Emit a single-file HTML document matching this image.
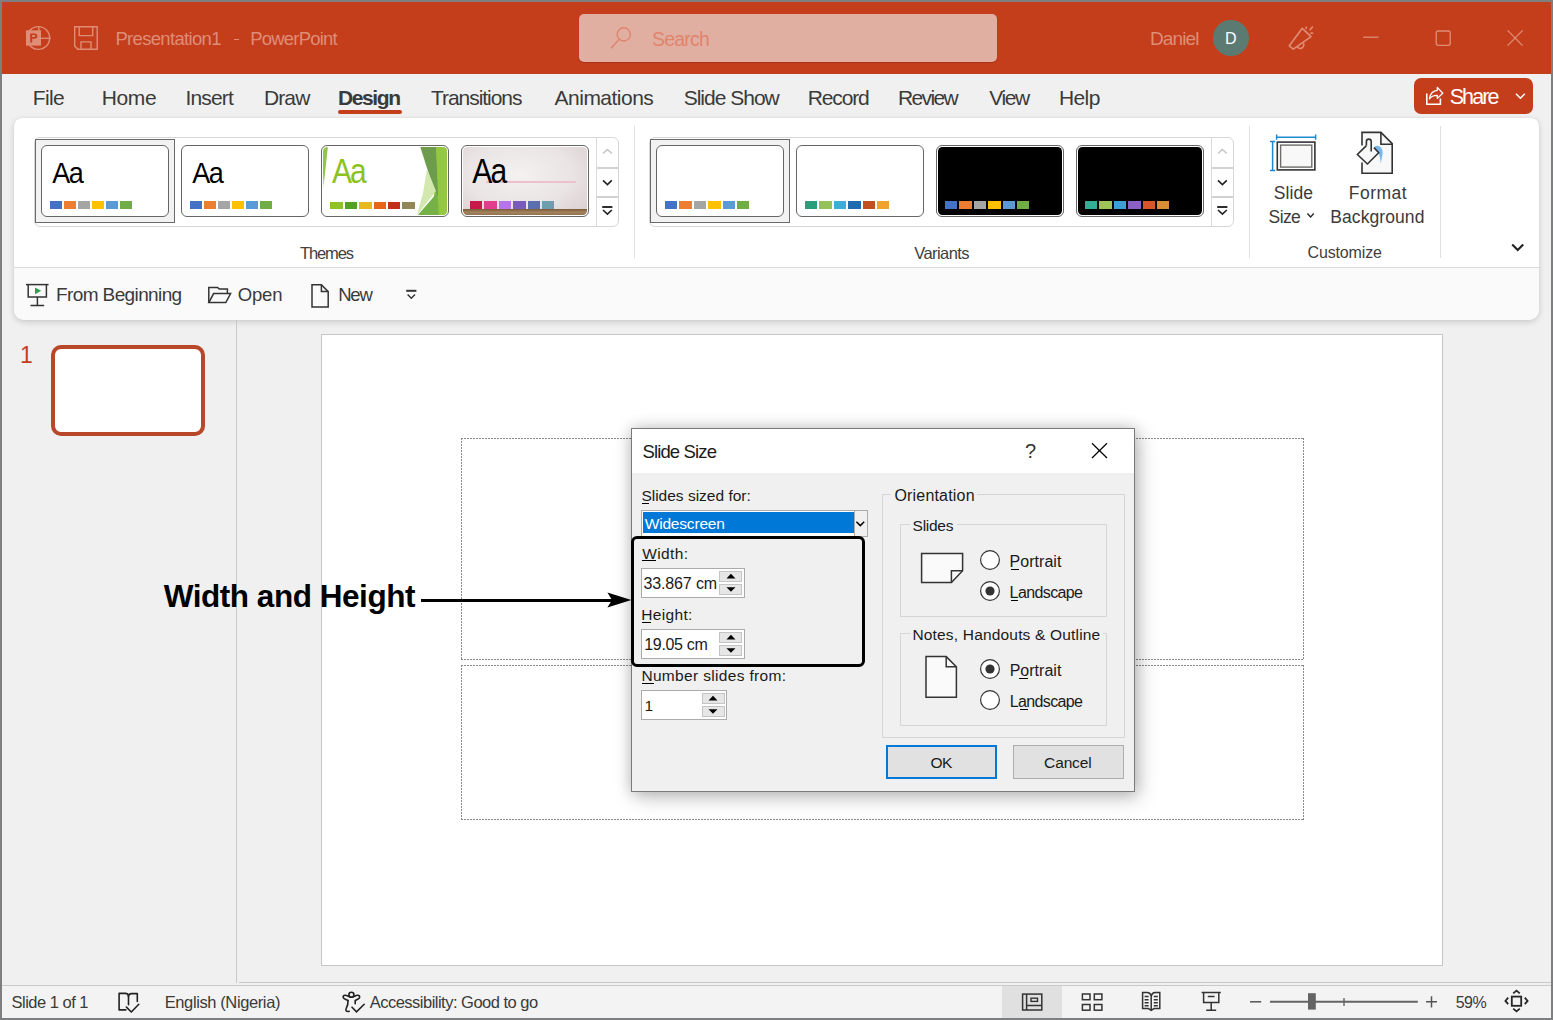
<!DOCTYPE html>
<html><head><meta charset="utf-8"><style>
html,body{margin:0;padding:0}
body{width:1553px;height:1020px;position:relative;overflow:hidden;background:#7D7F80;font-family:"Liberation Sans",sans-serif}
.a{position:absolute}
.t{position:absolute;white-space:pre;font-family:"Liberation Sans",sans-serif}
svg.a{overflow:visible}
</style></head><body>
<div class="a" style="left:2px;top:2px;width:1549px;height:1016px;background:#F0F0F0"></div>
<div class="a" style="left:2px;top:2px;width:1549px;height:72px;background:#C43E1C"></div>
<svg class="a" style="left:0px;top:0px" width="1553" height="1020" viewBox="0 0 1553 1020">
<g fill="none" stroke="#DF8D77" stroke-width="1.4">
 <circle cx="38.3" cy="38" r="11.4"/>
 <line x1="38.8" y1="26.5" x2="38.8" y2="38"/>
 <line x1="41" y1="38.3" x2="50.5" y2="38.3"/>
</g>
<rect x="26" y="30.3" width="15" height="15.3" fill="#DF8D77"/>
<path d="M30.2 42.4 V33.4 H34.6 Q37.4 33.4 37.4 36.1 Q37.4 38.8 34.6 38.8 H32.2 V42.4 Z M32.2 35.1 V37.1 H34.3 Q35.4 37.1 35.4 36.1 Q35.4 35.1 34.3 35.1 Z" fill="#C43E1C" fill-rule="evenodd"/>
<g fill="none" stroke="#DF8D77" stroke-width="1.4">
 <path d="M74.7 26.7 H97.2 V49.2 H77.8 L74.7 46.1 Z"/>
 <path d="M79.2 26.7 V35.6 H92.7 V26.7"/>
 <path d="M81 49.2 V41.9 H91 V49.2"/>
</g>
</svg>
<div class="a" style="left:115px;top:0px;width:-115px;height:0px;"></div>
<div class="t" style="left:115.4px;top:29.9px;font-size:18.5px;line-height:18.5px;font-weight:400;letter-spacing:-0.67px;color:#DF8D77;">Presentation1</div>
<div class="a" style="left:234px;top:38.6px;width:5.199999999999989px;height:1.3999999999999986px;background:#DF8D77"></div>
<div class="t" style="left:250.2px;top:29.9px;font-size:18.5px;line-height:18.5px;font-weight:400;letter-spacing:-0.8px;color:#DF8D77;">PowerPoint</div>
<div class="a" style="left:579px;top:14px;width:418px;height:48px;background:#E1AFA2;border-radius:5px;box-shadow:0 1px 1px rgba(120,30,10,.35)"></div>
<svg class="a" style="left:0px;top:0px" width="1553" height="1020" viewBox="0 0 1553 1020"><g fill="none" stroke="#E0846C" stroke-width="1.4"><circle cx="623.8" cy="34.4" r="6.6"/><line x1="619.2" y1="39.2" x2="611" y2="48.3"/></g></svg>
<div class="t" style="left:652.0px;top:29.7px;font-size:19.5px;line-height:19.5px;font-weight:400;letter-spacing:-0.8px;color:#E0846C;">Search</div>
<div class="t" style="left:1150.0px;top:29.0px;font-size:19.0px;line-height:19.0px;font-weight:400;letter-spacing:-0.88px;color:#DF8D77;">Daniel</div>
<div class="a" style="left:1213px;top:20px;width:36px;height:36px;background:#5B7B72;border-radius:50%"></div>
<div class="t" style="left:1225.0px;top:31.1px;font-size:16.0px;line-height:16.0px;font-weight:400;letter-spacing:0px;color:#FFFFFF;">D</div>
<svg class="a" style="left:0px;top:0px" width="1553" height="1020" viewBox="0 0 1553 1020"><g fill="none" stroke="#DF8D77" stroke-width="1.6" stroke-linejoin="round">
<path d="M1302.3 28.3 L1311 36.6 L1293.3 49.2 L1289.3 45.8 Z"/>
<path d="M1297.2 46.5 A3.3 3.3 0 1 0 1303.4 43.2"/>
<line x1="1306.2" y1="26.4" x2="1306.2" y2="29"/>
<line x1="1309.6" y1="30.2" x2="1312.8" y2="26.6"/>
<line x1="1310.2" y1="33.2" x2="1313.2" y2="33.2"/>
</g>
<g fill="none" stroke="#DF8D77" stroke-width="1.3">
<line x1="1363.2" y1="37.2" x2="1378.6" y2="37.2"/>
<rect x="1436.2" y="31" width="14" height="14.3" rx="2"/>
<line x1="1507.6" y1="30.4" x2="1522.6" y2="45.6"/><line x1="1522.6" y1="30.4" x2="1507.6" y2="45.6"/>
</g></svg>
<div class="t" style="left:32.7px;top:87.1px;font-size:21.0px;line-height:21.0px;font-weight:400;letter-spacing:-0.63px;color:#3A3A3A;">File</div>
<div class="t" style="left:101.7px;top:87.1px;font-size:21.0px;line-height:21.0px;font-weight:400;letter-spacing:-0.33px;color:#3A3A3A;">Home</div>
<div class="t" style="left:185.5px;top:87.1px;font-size:21.0px;line-height:21.0px;font-weight:400;letter-spacing:-0.84px;color:#3A3A3A;">Insert</div>
<div class="t" style="left:264.0px;top:87.1px;font-size:21.0px;line-height:21.0px;font-weight:400;letter-spacing:-0.9px;color:#3A3A3A;">Draw</div>
<div class="t" style="left:338.0px;top:87.1px;font-size:21.0px;line-height:21.0px;font-weight:700;letter-spacing:-1.4px;color:#3A3A3A;">Design</div>
<div class="t" style="left:431.0px;top:87.1px;font-size:21.0px;line-height:21.0px;font-weight:400;letter-spacing:-1.05px;color:#3A3A3A;">Transitions</div>
<div class="t" style="left:554.6px;top:87.1px;font-size:21.0px;line-height:21.0px;font-weight:400;letter-spacing:-0.52px;color:#3A3A3A;">Animations</div>
<div class="t" style="left:683.7px;top:87.1px;font-size:21.0px;line-height:21.0px;font-weight:400;letter-spacing:-1.0px;color:#3A3A3A;">Slide Show</div>
<div class="t" style="left:807.8px;top:87.1px;font-size:21.0px;line-height:21.0px;font-weight:400;letter-spacing:-1.16px;color:#3A3A3A;">Record</div>
<div class="t" style="left:897.9px;top:87.1px;font-size:21.0px;line-height:21.0px;font-weight:400;letter-spacing:-1.6px;color:#3A3A3A;">Review</div>
<div class="t" style="left:989.3px;top:87.1px;font-size:21.0px;line-height:21.0px;font-weight:400;letter-spacing:-1.4px;color:#3A3A3A;">View</div>
<div class="t" style="left:1058.9px;top:87.1px;font-size:21.0px;line-height:21.0px;font-weight:400;letter-spacing:-0.57px;color:#3A3A3A;">Help</div>
<div class="a" style="left:338px;top:110.3px;width:63.80000000000001px;height:3.299999999999997px;background:#C43E1C;border-radius:2px"></div>
<div class="a" style="left:1414px;top:78px;width:119.29999999999995px;height:36px;background:#C43E1C;border-radius:7px"></div>
<svg class="a" style="left:0px;top:0px" width="1553" height="1020" viewBox="0 0 1553 1020"><g fill="none" stroke="#fff" stroke-width="1.6" stroke-linejoin="miter">
<path d="M1426.8 93.6 V104.2 H1440.4 V98.6"/>
<path d="M1437.3 87.4 L1442.8 93.2 L1437.3 98.4 V95.4 Q1432.2 95.2 1429.4 98.8 Q1430.6 90.8 1437.3 90.3 Z" stroke-width="1.3" stroke-linejoin="round"/>
<path d="M1516 93.8 L1520.4 98.2 L1524.8 93.8"/>
</g></svg>
<div class="t" style="left:1449.7px;top:87.0px;font-size:21.5px;line-height:21.5px;font-weight:400;letter-spacing:-1.93px;color:#FFFFFF;">Share</div>
<div class="a" style="left:14px;top:118px;width:1525px;height:202px;background:#FFFFFF;border-radius:8px 8px 10px 10px;box-shadow:0 2px 6px rgba(0,0,0,.16),0 0 1px rgba(0,0,0,.14)"></div>
<div class="a" style="left:14px;top:267px;width:1525px;height:53px;background:#FAFAFA;border-top:1px solid #DADADA;border-radius:0 0 10px 10px;box-sizing:border-box"></div>
<div class="a" style="left:33.5px;top:136.5px;width:585.0px;height:90.0px;border:1px solid #D6D6D6;border-radius:6px;box-sizing:border-box"></div><div class="a" style="left:596px;top:137px;width:1px;height:89px;background:#DADADA"></div><div class="a" style="left:597px;top:167px;width:21px;height:1.5999999999999943px;background:#D2D2D2"></div><div class="a" style="left:597px;top:196.2px;width:21px;height:1.6000000000000227px;background:#D2D2D2"></div><svg class="a" style="left:0px;top:0px" width="1553" height="1020" viewBox="0 0 1553 1020"><g fill="none" stroke-width="1.4">
<path d="M603 153.6 L607.4 149.4 L611.8 153.6" stroke="#C4C4C4"/>
<path d="M603 180.4 L607.4 184.6 L611.8 180.4" stroke="#222" stroke-width="1.6"/>
<path d="M602.2 207 H612.4" stroke="#222" stroke-width="1.9"/>
<path d="M603 210 L607.4 214.2 L611.8 210" stroke="#222" stroke-width="1.6"/>
</g></svg><div class="a" style="left:35px;top:139px;width:140px;height:84px;border:1.5px solid #6A6A6A;background:#F2F2F2;box-sizing:border-box"></div><div class="a" style="left:41px;top:145px;width:128px;height:72px;border:1.2px solid #666;border-radius:6px;box-sizing:border-box;background:#fff"></div><div class="a" style="left:43px;top:147px;width:124px;height:68px;border-radius:4.5px;overflow:hidden;background:#fff"><div class="a" style="left:7px;top:54px;width:12px;height:8px;background:#4472C4"></div><div class="a" style="left:21px;top:54px;width:12px;height:8px;background:#ED7D31"></div><div class="a" style="left:35px;top:54px;width:12px;height:8px;background:#A5A5A5"></div><div class="a" style="left:49px;top:54px;width:12px;height:8px;background:#FFC000"></div><div class="a" style="left:63px;top:54px;width:12px;height:8px;background:#5B9BD5"></div><div class="a" style="left:77px;top:54px;width:12px;height:8px;background:#70AD47"></div></div><div class="a" style="left:181px;top:145px;width:128px;height:72px;border:1.2px solid #666;border-radius:6px;box-sizing:border-box;background:#fff"></div><div class="a" style="left:183px;top:147px;width:124px;height:68px;border-radius:4.5px;overflow:hidden;background:#fff"><div class="a" style="left:7px;top:54px;width:12px;height:8px;background:#4472C4"></div><div class="a" style="left:21px;top:54px;width:12px;height:8px;background:#ED7D31"></div><div class="a" style="left:35px;top:54px;width:12px;height:8px;background:#A5A5A5"></div><div class="a" style="left:49px;top:54px;width:12px;height:8px;background:#FFC000"></div><div class="a" style="left:63px;top:54px;width:12px;height:8px;background:#5B9BD5"></div><div class="a" style="left:77px;top:54px;width:12px;height:8px;background:#70AD47"></div></div><div class="a" style="left:321px;top:145px;width:128px;height:72px;border:1.2px solid #666;border-radius:6px;box-sizing:border-box;background:#fff"></div><div class="a" style="left:323px;top:147px;width:124px;height:68px;border-radius:4.5px;overflow:hidden;background:#fff"><svg class="a" style="left:0;top:0" width="124" height="68" viewBox="2 2 124 68">
<rect x="0" y="0" width="128" height="72" fill="#fff"/>
<polygon points="1,1 7,1 2.5,42" fill="#92C64A"/>
<polygon points="115,1 127,1 127,71 112,71" fill="#8CC43C"/>
<polygon points="99,1 115,1 117,52 112,42" fill="#6D9C4C"/>
<polygon points="106,24 115,46 96,70 102,48" fill="#D3E8AF"/>
<polygon points="96,71 116,48 118,71" fill="#76B148"/>
<polygon points="115,1 127,1 127,71 118,71 117,40" fill="#94C841"/>
</svg><div class="a" style="left:7.399999999999999px;top:54.5px;width:12.4px;height:7.4px;background:#90C226"></div><div class="a" style="left:21.799999999999997px;top:54.5px;width:12.4px;height:7.4px;background:#54A021"></div><div class="a" style="left:36.2px;top:54.5px;width:12.4px;height:7.4px;background:#E6B91E"></div><div class="a" style="left:50.6px;top:54.5px;width:12.4px;height:7.4px;background:#E76618"></div><div class="a" style="left:65.0px;top:54.5px;width:12.4px;height:7.4px;background:#C42F1A"></div><div class="a" style="left:79.4px;top:54.5px;width:12.4px;height:7.4px;background:#918655"></div></div><div class="a" style="left:461px;top:145px;width:128px;height:72px;border:1.2px solid #666;border-radius:6px;box-sizing:border-box;background:#fff"></div><div class="a" style="left:463px;top:147px;width:124px;height:68px;border-radius:4.5px;overflow:hidden;background:#fff"><div class="a" style="left:0;top:0;width:124px;height:68px;background:radial-gradient(ellipse at 45% 40%,#F4F1F1 0%,#EAE4E4 55%,#D8CDCD 100%)"></div><div class="a" style="left:0;top:61.5px;width:124px;height:8px;background:linear-gradient(#7A5A38,#A3835E 40%,#86663F)"></div><div class="a" style="left:23px;top:34.3px;width:90px;height:1.4px;background:#EDC0CD"></div><div class="a" style="left:6.899999999999977px;top:54px;width:12.5px;height:8.2px;background:#C8194B"></div><div class="a" style="left:21.299999999999976px;top:54px;width:12.5px;height:8.2px;background:#E23C8C"></div><div class="a" style="left:35.699999999999974px;top:54px;width:12.5px;height:8.2px;background:#B872F0"></div><div class="a" style="left:50.09999999999998px;top:54px;width:12.5px;height:8.2px;background:#7B5BB8"></div><div class="a" style="left:64.49999999999997px;top:54px;width:12.5px;height:8.2px;background:#5A6FAD"></div><div class="a" style="left:78.89999999999998px;top:54px;width:12.5px;height:8.2px;background:#6D9EAE"></div></div>
<div class="t" style="left:52.3px;top:161.0px;font-size:27px;line-height:27px;font-weight:400;letter-spacing:-1.6px;color:#000000;transform:scaleY(1.121);transform-origin:0 22.0px;">Aa</div>
<div class="t" style="left:192.3px;top:161.0px;font-size:27px;line-height:27px;font-weight:400;letter-spacing:-1.6px;color:#000000;transform:scaleY(1.121);transform-origin:0 22.0px;">Aa</div>
<div class="t" style="left:332.0px;top:158.0px;font-size:30px;line-height:30px;font-weight:400;letter-spacing:-2.0px;color:#8CC21E;transform:scaleY(1.19);transform-origin:0 25.0px;">Aa</div>
<div class="t" style="left:472.2px;top:157.8px;font-size:30px;line-height:30px;font-weight:400;letter-spacing:-1.6px;color:#000000;transform:scaleY(1.19);transform-origin:0 25.0px;">Aa</div>
<div class="a" style="left:648.5px;top:136.5px;width:585.0px;height:90.0px;border:1px solid #D6D6D6;border-radius:6px;box-sizing:border-box"></div><div class="a" style="left:1211px;top:137px;width:1px;height:89px;background:#DADADA"></div><div class="a" style="left:1212px;top:167px;width:21px;height:1.5999999999999943px;background:#D2D2D2"></div><div class="a" style="left:1212px;top:196.2px;width:21px;height:1.6000000000000227px;background:#D2D2D2"></div><svg class="a" style="left:0px;top:0px" width="1553" height="1020" viewBox="0 0 1553 1020"><g fill="none" stroke-width="1.4">
<path d="M1218 153.6 L1222.4 149.4 L1226.8 153.6" stroke="#C4C4C4"/>
<path d="M1218 180.4 L1222.4 184.6 L1226.8 180.4" stroke="#222" stroke-width="1.6"/>
<path d="M1217.2 207 H1227.4" stroke="#222" stroke-width="1.9"/>
<path d="M1218 210 L1222.4 214.2 L1226.8 210" stroke="#222" stroke-width="1.6"/>
</g></svg><div class="a" style="left:650px;top:139px;width:140px;height:84px;border:1.5px solid #6A6A6A;background:#F2F2F2;box-sizing:border-box"></div><div class="a" style="left:656px;top:145px;width:128px;height:72px;border:1.2px solid #666;border-radius:6px;box-sizing:border-box;background:#fff"></div><div class="a" style="left:658px;top:147px;width:124px;height:68px;border-radius:4.5px;overflow:hidden;background:#fff"><div class="a" style="left:7.0px;top:54px;width:12.4px;height:8px;background:#4472C4"></div><div class="a" style="left:21.4px;top:54px;width:12.4px;height:8px;background:#ED7D31"></div><div class="a" style="left:35.8px;top:54px;width:12.4px;height:8px;background:#A5A5A5"></div><div class="a" style="left:50.2px;top:54px;width:12.4px;height:8px;background:#FFC000"></div><div class="a" style="left:64.6px;top:54px;width:12.4px;height:8px;background:#5B9BD5"></div><div class="a" style="left:79.0px;top:54px;width:12.4px;height:8px;background:#70AD47"></div></div><div class="a" style="left:796px;top:145px;width:128px;height:72px;border:1.2px solid #666;border-radius:6px;box-sizing:border-box;background:#fff"></div><div class="a" style="left:798px;top:147px;width:124px;height:68px;border-radius:4.5px;overflow:hidden;background:#fff"><div class="a" style="left:7.0px;top:54px;width:12.4px;height:8px;background:#2A9D7B"></div><div class="a" style="left:21.4px;top:54px;width:12.4px;height:8px;background:#94C25A"></div><div class="a" style="left:35.8px;top:54px;width:12.4px;height:8px;background:#3DAFD6"></div><div class="a" style="left:50.2px;top:54px;width:12.4px;height:8px;background:#1F6BAE"></div><div class="a" style="left:64.6px;top:54px;width:12.4px;height:8px;background:#C24F1E"></div><div class="a" style="left:79.0px;top:54px;width:12.4px;height:8px;background:#F0A22E"></div></div><div class="a" style="left:936px;top:145px;width:128px;height:72px;border:1.2px solid #666;border-radius:6px;box-sizing:border-box;background:#fff"></div><div class="a" style="left:938px;top:147px;width:124px;height:68px;border-radius:4.5px;overflow:hidden;background:#fff"><div class="a" style="left:0;top:0;width:124px;height:68px;background:#000"></div><div class="a" style="left:7.0px;top:54px;width:12.4px;height:8px;background:#4472C4"></div><div class="a" style="left:21.4px;top:54px;width:12.4px;height:8px;background:#ED7D31"></div><div class="a" style="left:35.8px;top:54px;width:12.4px;height:8px;background:#A5A5A5"></div><div class="a" style="left:50.2px;top:54px;width:12.4px;height:8px;background:#FFC000"></div><div class="a" style="left:64.6px;top:54px;width:12.4px;height:8px;background:#5B9BD5"></div><div class="a" style="left:79.0px;top:54px;width:12.4px;height:8px;background:#70AD47"></div></div><div class="a" style="left:1076px;top:145px;width:128px;height:72px;border:1.2px solid #666;border-radius:6px;box-sizing:border-box;background:#fff"></div><div class="a" style="left:1078px;top:147px;width:124px;height:68px;border-radius:4.5px;overflow:hidden;background:#fff"><div class="a" style="left:0;top:0;width:124px;height:68px;background:#000"></div><div class="a" style="left:7.0px;top:54px;width:12.4px;height:8px;background:#31AE94"></div><div class="a" style="left:21.4px;top:54px;width:12.4px;height:8px;background:#9DC458"></div><div class="a" style="left:35.8px;top:54px;width:12.4px;height:8px;background:#3C9FD6"></div><div class="a" style="left:50.2px;top:54px;width:12.4px;height:8px;background:#8A60C6"></div><div class="a" style="left:64.6px;top:54px;width:12.4px;height:8px;background:#D9542B"></div><div class="a" style="left:79.0px;top:54px;width:12.4px;height:8px;background:#D98E36"></div></div>
<div class="t" style="left:300.0px;top:244.8px;font-size:16.5px;line-height:16.5px;font-weight:400;letter-spacing:-1.12px;color:#404040;">Themes</div>
<div class="t" style="left:914.2px;top:244.5px;font-size:16.5px;line-height:16.5px;font-weight:400;letter-spacing:-0.56px;color:#404040;">Variants</div>
<div class="t" style="left:1307.5px;top:245.2px;font-size:16.0px;line-height:16.0px;font-weight:400;letter-spacing:-0.15px;color:#404040;">Customize</div>
<div class="a" style="left:634px;top:126px;width:1px;height:132px;background:#E0E0E0"></div>
<div class="a" style="left:1249px;top:126px;width:1px;height:132px;background:#E0E0E0"></div>
<div class="a" style="left:1440px;top:126px;width:1px;height:132px;background:#E0E0E0"></div>
<svg class="a" style="left:0px;top:0px" width="1553" height="1020" viewBox="0 0 1553 1020"><g fill="none">
<path d="M1276.6 137.2 H1315.6 M1276.6 134.6 V139.8 M1315.6 134.6 V139.8" stroke="#1E88D0" stroke-width="1.5"/>
<path d="M1272.6 141.4 V170.4 M1270 141.4 H1275.2 M1270 170.4 H1275.2" stroke="#1E88D0" stroke-width="1.5"/>
<rect x="1277.3" y="142.1" width="37.6" height="27.8" stroke="#333" stroke-width="1.6" fill="#FFFFFF"/>
<rect x="1280.6" y="145.1" width="31.2" height="22" stroke="#6E6C68" stroke-width="1.4" fill="#F8F8F8"/>
</g></svg>
<div class="t" style="left:1273.7px;top:184.7px;font-size:17.5px;line-height:17.5px;font-weight:400;letter-spacing:0.12px;color:#3A3A3A;">Slide</div>
<div class="t" style="left:1268.6px;top:209.0px;font-size:17.5px;line-height:17.5px;font-weight:400;letter-spacing:-0.63px;color:#3A3A3A;">Size</div>
<svg class="a" style="left:0px;top:0px" width="1553" height="1020" viewBox="0 0 1553 1020"><path d="M1307.4 213.6 L1310.6 217 L1313.8 213.6" fill="none" stroke="#262626" stroke-width="1.4"/></svg>
<svg class="a" style="left:0px;top:0px" width="1553" height="1020" viewBox="0 0 1553 1020"><path d="M1362 132.4 H1380.9 L1392.2 143.7 V173.3 H1362 Z" fill="#F8F8F8"/>
<g stroke="#333" stroke-width="1.6" fill="none" stroke-linejoin="miter">
<path d="M1362 145.6 V132.4 H1380.9 L1392.2 143.7 V173.3 H1362 V162.6"/>
<path d="M1380.9 132.4 V144.2 H1392.2"/>
</g>
<path d="M1374 147.2 Q1377 144.5 1380.5 147 Q1383.5 150 1382.3 156 L1380.6 163.4 Q1380.2 157 1378.7 152.8 Z" fill="#7AB8EC"/>
<g stroke="#333" stroke-width="1.6" fill="none" stroke-linejoin="miter">
<path d="M1366.4 145.6 L1357.4 154.5 L1367.4 164 L1378.7 152.8 L1374 147.6"/>
<path d="M1366.4 145.6 V141.5 A2.4 2.4 0 0 1 1371.2 141.5 V151.5"/>
</g>
</svg>
<div class="t" style="left:1348.7px;top:184.7px;font-size:17.5px;line-height:17.5px;font-weight:400;letter-spacing:0.52px;color:#3A3A3A;">Format</div>
<div class="t" style="left:1330.3px;top:209.0px;font-size:17.5px;line-height:17.5px;font-weight:400;letter-spacing:0.08px;color:#3A3A3A;">Background</div>
<svg class="a" style="left:0px;top:0px" width="1553" height="1020" viewBox="0 0 1553 1020"><path d="M1512.2 244.4 L1517.7 250 L1523.2 244.4" fill="none" stroke="#222" stroke-width="2.1"/></svg>
<svg class="a" style="left:0px;top:0px" width="1553" height="1020" viewBox="0 0 1553 1020"><g fill="none" stroke="#333" stroke-width="1.5">
<path d="M26 284.6 H48.6"/>
<path d="M28.2 284.6 V297 H46.4 V284.6"/>
<path d="M37.4 297 V305.6 M30.5 305.6 H44.2"/>
</g>
<path d="M35 287.4 L41.2 290.8 L35 294.2 Z" fill="#2E9D4E"/>
<g fill="none" stroke="#333" stroke-width="1.5" stroke-linejoin="miter">
<path d="M208.8 302.6 V287.4 H217.6 L219.2 289 H227.4 V293.6"/>
<path d="M208.8 302.6 L213.6 293.6 H230.6 L225.8 302.6 Z"/>
<path d="M312 284.8 H321.4 L328.2 291.6 V307 H312 Z"/>
<path d="M321.4 284.8 V291.6 H328.2"/>
</g>
<g fill="none" stroke="#333">
<path d="M406.2 290.8 H416.4" stroke-width="2"/>
<path d="M407.6 294.4 L411.3 298.2 L415 294.4" stroke-width="1.4"/>
</g></svg>
<div class="t" style="left:56.1px;top:284.7px;font-size:19.0px;line-height:19.0px;font-weight:400;letter-spacing:-0.62px;color:#3A3A3A;">From Beginning</div>
<div class="t" style="left:237.7px;top:285.8px;font-size:18.5px;line-height:18.5px;font-weight:400;letter-spacing:-0.17px;color:#3A3A3A;">Open</div>
<div class="t" style="left:338.2px;top:285.8px;font-size:18.5px;line-height:18.5px;font-weight:400;letter-spacing:-1.2px;color:#3A3A3A;">New</div>
<div class="a" style="left:236px;top:320px;width:1px;height:663px;background:#C9C9C9"></div>
<div class="a" style="left:239px;top:982px;width:1312px;height:1.2000000000000455px;background:#C9C9C9"></div>
<div class="a" style="left:2px;top:985px;width:1549px;height:1.2000000000000455px;background:#C9C9C9"></div>
<div class="a" style="left:2px;top:986px;width:1549px;height:32px;background:#F3F3F3"></div>
<div class="t" style="left:20.0px;top:343.8px;font-size:23.0px;line-height:23.0px;font-weight:400;letter-spacing:0px;color:#C43E1C;">1</div>
<div class="a" style="left:51px;top:345px;width:154px;height:91px;border:4px solid #B9472A;border-radius:10px;background:#fff;box-sizing:border-box"></div>
<div class="a" style="left:321px;top:334px;width:1122px;height:632px;background:#fff;border:1px solid #C6C6C6;box-sizing:border-box"></div>
<svg class="a" style="left:0px;top:0px" width="1553" height="1020" viewBox="0 0 1553 1020"><g fill="none" stroke="#8A8A8A" stroke-width="1" stroke-dasharray="2 1">
<path d="M461 438.5 H1304 M461 659.5 H1304 M461 665.5 H1304 M461 819.5 H1304"/>
<path d="M461.5 438 V660 M1303.5 438 V660 M461.5 665 V820 M1303.5 665 V820"/>
</g></svg>
<div class="t" style="left:11.6px;top:993.8px;font-size:16.5px;line-height:16.5px;font-weight:400;letter-spacing:-0.52px;color:#3A3A3A;">Slide 1 of 1</div>
<div class="t" style="left:164.7px;top:993.8px;font-size:16.5px;line-height:16.5px;font-weight:400;letter-spacing:-0.39px;color:#3A3A3A;">English (Nigeria)</div>
<div class="t" style="left:369.7px;top:994.0px;font-size:16.5px;line-height:16.5px;font-weight:400;letter-spacing:-0.51px;color:#3A3A3A;">Accessibility: Good to go</div>
<div class="t" style="left:1455.7px;top:995.2px;font-size:16.0px;line-height:16.0px;font-weight:400;letter-spacing:-0.5px;color:#3A3A3A;">59%</div>
<svg class="a" style="left:0px;top:0px" width="1553" height="1020" viewBox="0 0 1553 1020"><g fill="none" stroke="#222" stroke-width="1.6" stroke-linejoin="round" stroke-linecap="round">
<path d="M125.8 1009.9 H119.1 V993.4 H125.2 Q128.5 993.4 128.5 996.6 V1004.8"/>
<path d="M128.5 996.6 Q128.5 993.6 131.6 993.6 H137.3 V1001.5"/>
<path d="M126.4 1007.1 L131.3 1012 L138.8 1004.3"/>
</g>
<g fill="none" stroke="#222" stroke-width="1.6" stroke-linecap="round">
<circle cx="351.4" cy="994.8" r="2.5"/>
<path d="M348 1000.5 C347 999.8 344.5 999.2 343.5 998 C342.5 996.5 343.6 995 345.3 995.2 C347.5 995.5 349.5 997.3 351.4 997.3 C353.3 997.3 355.3 995.5 357.5 995.2 C359.2 995 360.3 996.5 359.3 998 C358.3 999.2 356 999.8 355.2 1000.5 V1003.8"/>
<path d="M348 1000.5 C348.2 1003 347.5 1006 346.2 1008.5 C345.2 1010.5 346.5 1012 349.2 1011.2"/>
<path d="M352 1007.2 L356.5 1011.8 L364.2 1004.3"/>
</g></svg>
<div class="a" style="left:1002px;top:986px;width:60px;height:32px;background:#E0E0E0"></div>
<svg class="a" style="left:0px;top:0px" width="1553" height="1020" viewBox="0 0 1553 1020"><g fill="none" stroke="#333" stroke-width="1.5">
<rect x="1022.6" y="994.1" width="19.2" height="15.9"/>
<path d="M1026.6 994.1 V1010 M1026.6 1005.4 H1041.8"/>
<rect x="1031" y="998.2" width="6.5" height="3.2" stroke-width="1.4"/>
<rect x="1082.4" y="994" width="7.6" height="5.7"/><rect x="1094.3" y="994" width="7.6" height="5.7"/>
<rect x="1082.4" y="1004.5" width="7.6" height="5.7"/><rect x="1094.3" y="1004.5" width="7.6" height="5.7"/>
<path d="M1151.2 1010 V996 Q1150.2 992.6 1147.4 992.6 H1142.6 V1008.6 H1148.4 L1151.2 1010.4 L1154 1008.6 H1159.8 V992.6 H1155 Q1152.2 992.6 1151.2 996"/>
<path d="M1144.6 996.6 H1148.6 M1144.6 999.7 H1148.6 M1144.6 1002.7 H1148.6 M1144.6 1005.7 H1148.6 M1153.8 996.6 H1157.8 M1153.8 999.7 H1157.8 M1153.8 1002.7 H1157.8 M1153.8 1005.7 H1157.8" stroke-width="1.5"/>
<path d="M1201.6 992.4 H1220.8 M1203.6 992.4 V1002.6 H1218.8 V992.4 M1211.2 1002.6 V1010.2 M1206.2 1010.2 H1216.2 M1207.8 996.6 H1214.6"/>
<path d="M1250 1001.8 H1261.2" stroke="#555"/>
<path d="M1426 1001.8 H1437 M1431.5 996.2 V1007.4" stroke="#555"/>
<path d="M1270 1001.8 H1417.8" stroke="#646464" stroke-width="2"/>
<path d="M1344 998 V1006" stroke="#646464" stroke-width="1.4"/>
</g>
<rect x="1308" y="993.2" width="7.8" height="16.4" fill="#646464"/>
<g fill="none" stroke="#262626" stroke-width="1.8">
<rect x="1511.8" y="996.6" width="9.4" height="9.2"/>
<path d="M1513.2 993.4 L1516.5 990.6 L1519.8 993.4 M1513.2 1008.6 L1516.5 1011.4 L1519.8 1008.6 M1508.2 997.6 L1505.4 1000.9 L1508.2 1004.2 M1524.8 997.6 L1527.6 1000.9 L1524.8 1004.2"/>
</g></svg>
<div class="a" style="left:631px;top:428px;width:504px;height:364px;background:#F0F0F0;border:1px solid #7A7A7A;box-sizing:border-box;box-shadow:0 0 14px rgba(0,0,0,.2),4px 6px 20px rgba(0,0,0,.2)"></div>
<div class="a" style="left:632px;top:429px;width:502px;height:44px;background:#fff"></div>
<div class="t" style="left:642.5px;top:442.9px;font-size:18.5px;line-height:18.5px;font-weight:400;letter-spacing:-0.87px;color:#1A1A1A;">Slide Size</div>
<div class="t" style="left:1024.9px;top:440.9px;font-size:20px;line-height:20px;font-weight:400;letter-spacing:0px;color:#333333;">?</div>
<svg class="a" style="left:0px;top:0px" width="1553" height="1020" viewBox="0 0 1553 1020"><g stroke="#000" stroke-width="1.2"><line x1="1092" y1="443.2" x2="1107" y2="458"/><line x1="1107" y1="443.2" x2="1092" y2="458"/></g></svg>
<div class="t" style="left:641.4px;top:487.8px;font-size:15.5px;line-height:15.5px;font-weight:400;letter-spacing:0.0px;color:#1A1A1A;">Slides sized for:</div>
<div class="a" style="left:642.4px;top:503px;width:6.2000000000000455px;height:1px;background:#000"></div>
<div class="a" style="left:641px;top:510px;width:227px;height:27px;background:#fff;border:1px solid #ABABAB;box-sizing:border-box"></div>
<div class="a" style="left:642.6px;top:512px;width:211.0px;height:21px;background:#0078D7"></div>
<div class="a" style="left:854px;top:511px;width:13px;height:25px;background:#F0F0F0;border-left:1px solid #ABABAB;box-sizing:border-box"></div>
<svg class="a" style="left:0px;top:0px" width="1553" height="1020" viewBox="0 0 1553 1020"><path d="M856.4 521.8 L860.3 525.6 L864.2 521.8" fill="none" stroke="#000" stroke-width="1.5"/></svg>
<div class="t" style="left:644.7px;top:515.8px;font-size:15.5px;line-height:15.5px;font-weight:400;letter-spacing:-0.18px;color:#FFFFFF;">Widescreen</div>
<div class="t" style="left:642.3px;top:545.6px;font-size:15.5px;line-height:15.5px;font-weight:400;letter-spacing:0.36px;color:#1A1A1A;">Width:</div>
<div class="a" style="left:642.3px;top:560.4px;width:13.300000000000068px;height:1.0px;background:#000"></div>
<div class="a" style="left:641px;top:568px;width:104px;height:30px;background:#fff;border:1px solid #ABABAB;box-sizing:border-box"></div><div class="a" style="left:719.4px;top:570.5px;width:23.100000000000023px;height:11.899999999999977px;background:#E6E6E6;border:1px solid #C4C4C4;box-sizing:border-box"></div><div class="a" style="left:719.4px;top:583.6px;width:23.100000000000023px;height:11.899999999999977px;background:#E6E6E6;border:1px solid #C4C4C4;box-sizing:border-box"></div><svg class="a" style="left:0px;top:0px" width="1553" height="1020" viewBox="0 0 1553 1020"><polygon points="726.45,578.4 735.45,578.4 730.95,573.8" fill="#000"/><polygon points="726.45,587.2 735.45,587.2 730.95,591.8" fill="#000"/></svg>
<div class="t" style="left:643.4px;top:575.7px;font-size:16.0px;line-height:16.0px;font-weight:400;letter-spacing:-0.12px;color:#1A1A1A;">33.867 cm</div>
<div class="t" style="left:641.3px;top:607.0px;font-size:15.5px;line-height:15.5px;font-weight:400;letter-spacing:0.32px;color:#1A1A1A;">Height:</div>
<div class="a" style="left:642.3px;top:621.8px;width:8.700000000000045px;height:1.0px;background:#000"></div>
<div class="a" style="left:641px;top:629px;width:104px;height:30px;background:#fff;border:1px solid #ABABAB;box-sizing:border-box"></div><div class="a" style="left:719.4px;top:631.5px;width:23.100000000000023px;height:11.899999999999977px;background:#E6E6E6;border:1px solid #C4C4C4;box-sizing:border-box"></div><div class="a" style="left:719.4px;top:644.6px;width:23.100000000000023px;height:11.899999999999977px;background:#E6E6E6;border:1px solid #C4C4C4;box-sizing:border-box"></div><svg class="a" style="left:0px;top:0px" width="1553" height="1020" viewBox="0 0 1553 1020"><polygon points="726.45,639.4 735.45,639.4 730.95,634.8" fill="#000"/><polygon points="726.45,648.2 735.45,648.2 730.95,652.8" fill="#000"/></svg>
<div class="t" style="left:644.3px;top:636.6px;font-size:16.0px;line-height:16.0px;font-weight:400;letter-spacing:-0.33px;color:#1A1A1A;">19.05 cm</div>
<div class="t" style="left:641.4px;top:668.0px;font-size:15.5px;line-height:15.5px;font-weight:400;letter-spacing:0.33px;color:#1A1A1A;">Number slides from:</div>
<div class="a" style="left:642.4px;top:682.6px;width:11.399999999999977px;height:1.0px;background:#000"></div>
<div class="a" style="left:641px;top:690px;width:86px;height:30px;background:#fff;border:1px solid #ABABAB;box-sizing:border-box"></div><div class="a" style="left:701.5px;top:692.5px;width:23.0px;height:11.899999999999977px;background:#E6E6E6;border:1px solid #C4C4C4;box-sizing:border-box"></div><div class="a" style="left:701.5px;top:705.6px;width:23.0px;height:11.899999999999977px;background:#E6E6E6;border:1px solid #C4C4C4;box-sizing:border-box"></div><svg class="a" style="left:0px;top:0px" width="1553" height="1020" viewBox="0 0 1553 1020"><polygon points="708.5,700.4 717.5,700.4 713.0,695.8" fill="#000"/><polygon points="708.5,709.2 717.5,709.2 713.0,713.8" fill="#000"/></svg>
<div class="t" style="left:644.6px;top:698.2px;font-size:15.5px;line-height:15.5px;font-weight:400;letter-spacing:0px;color:#1A1A1A;">1</div>
<svg class="a" style="left:0px;top:0px" width="1553" height="1020" viewBox="0 0 1553 1020"><g fill="none" stroke="#D5D5D5" stroke-width="1">
<path d="M890.5 494.5 H882.5 V737.5 H1124.5 V494.5 H977"/>
<path d="M910 524.5 H900.5 V616.5 H1106.5 V524.5 H957"/>
<path d="M910 633.5 H900.5 V725.5 H1106.5 V633.5 H1103"/>
</g></svg>
<div class="t" style="left:894.4px;top:488.1px;font-size:16.0px;line-height:16.0px;font-weight:400;letter-spacing:0.19px;color:#1A1A1A;">Orientation</div>
<div class="t" style="left:912.6px;top:517.8px;font-size:15.5px;line-height:15.5px;font-weight:400;letter-spacing:-0.28px;color:#1A1A1A;">Slides</div>
<div class="t" style="left:912.4px;top:626.8px;font-size:15.5px;line-height:15.5px;font-weight:400;letter-spacing:0.18px;color:#1A1A1A;">Notes, Handouts &amp; Outline</div>
<svg class="a" style="left:0px;top:0px" width="1553" height="1020" viewBox="0 0 1553 1020"><g stroke="#333" stroke-width="1.5" fill="#FAFAFA" stroke-linejoin="miter">
<path d="M921.6 553.6 H962.6 V570.8 L951.4 582.4 H921.6 Z"/>
<path d="M951.4 582.4 V570.8 H962.6" fill="none"/>
<path d="M926 656.6 H946.2 L956.4 666.8 V697.2 H926 Z"/>
<path d="M946.2 656.6 V666.8 H956.4" fill="none"/>
</g>
<g stroke="#333" stroke-width="1.2" fill="#fff">
<circle cx="990" cy="560" r="9.4"/><circle cx="990" cy="591" r="9.4"/>
<circle cx="990" cy="669" r="9.4"/><circle cx="990" cy="700" r="9.4"/>
</g>
<circle cx="990" cy="591" r="4.6" fill="#333"/><circle cx="990" cy="669" r="4.6" fill="#333"/></svg>
<div class="t" style="left:1009.6px;top:553.9px;font-size:16.0px;line-height:16.0px;font-weight:400;letter-spacing:0.03px;color:#1A1A1A;">Portrait</div>
<div class="t" style="left:1009.6px;top:585.1px;font-size:16.0px;line-height:16.0px;font-weight:400;letter-spacing:-0.61px;color:#1A1A1A;">Landscape</div>
<div class="t" style="left:1009.7px;top:662.6px;font-size:16.0px;line-height:16.0px;font-weight:400;letter-spacing:0.01px;color:#1A1A1A;">Portrait</div>
<div class="t" style="left:1009.7px;top:693.9px;font-size:16.0px;line-height:16.0px;font-weight:400;letter-spacing:-0.62px;color:#1A1A1A;">Landscape</div>
<div class="a" style="left:1010.6px;top:569px;width:8.600000000000023px;height:1px;background:#000"></div>
<div class="a" style="left:1010.6px;top:600.2px;width:7.7999999999999545px;height:1.0px;background:#000"></div>
<div class="a" style="left:1019.4px;top:677.8px;width:8.600000000000023px;height:1.0px;background:#000"></div>
<div class="a" style="left:1019.6px;top:709px;width:8.399999999999977px;height:1px;background:#000"></div>
<div class="a" style="left:886px;top:745px;width:111px;height:34px;background:#E1E1E1;border:2px solid #0078D7;box-sizing:border-box"></div>
<div class="a" style="left:1013px;top:745px;width:111px;height:34px;background:#E1E1E1;border:1px solid #ADADAD;box-sizing:border-box"></div>
<div class="t" style="left:930.5px;top:755.0px;font-size:15.5px;line-height:15.5px;font-weight:400;letter-spacing:-0.5px;color:#1A1A1A;">OK</div>
<div class="t" style="left:1044.1px;top:755.0px;font-size:15.5px;line-height:15.5px;font-weight:400;letter-spacing:-0.14px;color:#1A1A1A;">Cancel</div>
<div class="a" style="left:630.6px;top:536.2px;width:234.0px;height:130.79999999999995px;border:3.9px solid #000;border-radius:6px;box-sizing:border-box"></div>
<div class="a" style="left:421px;top:598.5px;width:191px;height:3.1000000000000227px;background:#000"></div>
<svg class="a" style="left:0px;top:0px" width="1553" height="1020" viewBox="0 0 1553 1020"><polygon points="607.4,592.6 631.4,600 607.4,607.4 612,600" fill="#000"/></svg>
<div class="t" style="left:163.7px;top:580.6px;font-size:31.5px;line-height:31.5px;font-weight:700;letter-spacing:-0.46px;color:#000000;">Width and Height</div>
</body></html>
